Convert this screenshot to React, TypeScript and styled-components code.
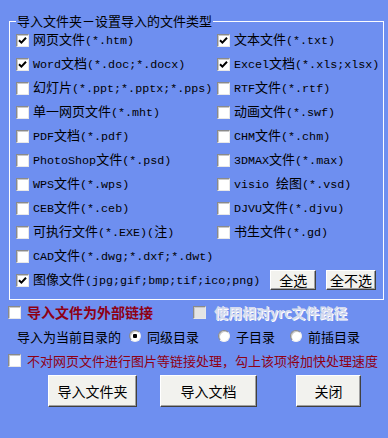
import styled, { createGlobalStyle } from 'styled-components';

type TItem = {
  label: string;
  checked?: boolean;
};

const leftItems: TItem[] = [
  { label: '网页文件(*.htm)', checked: true },
  { label: 'Word文档(*.doc;*.docx)', checked: true },
  { label: '幻灯片(*.ppt;*.pptx;*.pps)' },
  { label: '单一网页文件(*.mht)' },
  { label: 'PDF文档(*.pdf)' },
  { label: 'PhotoShop文件(*.psd)' },
  { label: 'WPS文件(*.wps)' },
  { label: 'CEB文件(*.ceb)' },
  { label: '可执行文件(*.EXE)(注)' },
  { label: 'CAD文件(*.dwg;*.dxf;*.dwt)' },
];

const rightItems: TItem[] = [
  { label: '文本文件(*.txt)', checked: true },
  { label: 'Excel文档(*.xls;xlsx)', checked: true },
  { label: 'RTF文件(*.rtf)' },
  { label: '动画文件(*.swf)' },
  { label: 'CHM文件(*.chm)' },
  { label: '3DMAX文件(*.max)' },
  { label: 'visio 绘图(*.vsd)' },
  { label: 'DJVU文件(*.djvu)' },
  { label: '书生文件(*.gd)' },
];

// ascii runs get the narrow mono face, like the half-width glyphs of the original
function LabelText({ text }: { text: string }) {
  const runs = text.match(/[\x20-\x7e]+|[^\x20-\x7e]+/g) || [];
  return (
    <>
      {runs.map((run, i) =>
        /^[\x20-\x7e]+$/.test(run) ? <Ascii key={i}>{run}</Ascii> : <span key={i}>{run}</span>
      )}
    </>
  );
}

function CheckBox({ checked, disabled }: { checked?: boolean; disabled?: boolean }) {
  return (
    <Box $disabled={disabled}>
      {checked && (
        <svg width='9' height='9' viewBox='0 0 9 9'>
          <path d='M1 4.2 L3.4 6.6 L8 1.8' fill='none' stroke='#000' strokeWidth='2' />
        </svg>
      )}
    </Box>
  );
}

function FileItem({ item }: { item: TItem }) {
  return (
    <Item>
      <CheckBox checked={item.checked} />
      <ItemText>
        <LabelText text={item.label} />
      </ItemText>
    </Item>
  );
}

export default function App() {
  return (
    <Frame>
      <GlobalStyle />
      <Group>
        <Legend>导入文件夹－设置导入的文件类型</Legend>
        <FileGrid>
          {leftItems.map((item, i) => (
            <GridPair key={item.label}>
              <FileItem item={item} />
              {rightItems[i] ? <FileItem item={rightItems[i]} /> : <span />}
            </GridPair>
          ))}
        </FileGrid>
        <LastRow>
          <FileItem item={{ label: '图像文件(jpg;gif;bmp;tif;ico;png)', checked: true }} />
          <SmallButton $width={47}>全选</SmallButton>
          <SmallButton $width={51}>全不选</SmallButton>
        </LastRow>
      </Group>

      <OptionRow>
        <OptionGroup $width={185}>
          <CheckBox />
          <StrongRed>导入文件为外部链接</StrongRed>
        </OptionGroup>
        <OptionGroup $gap={8}>
          <CheckBox disabled />
          <DisabledText>使用相对yrc文件路径</DisabledText>
        </OptionGroup>
      </OptionRow>

      <RadioRow>
        <RadioCaption>导入为当前目录的</RadioCaption>
        <RadioOption $width={89}>
          <Radio $checked />
          <span>同级目录</span>
        </RadioOption>
        <RadioOption $width={72}>
          <Radio />
          <span>子目录</span>
        </RadioOption>
        <RadioOption>
          <Radio />
          <span>前插目录</span>
        </RadioOption>
      </RadioRow>

      <OptionRow>
        <OptionGroup>
          <CheckBox />
          <RedText>不对网页文件进行图片等链接处理，勾上该项将加快处理速度</RedText>
        </OptionGroup>
      </OptionRow>

      <ActionBar>
        <ActionButton $width={89}>导入文件夹</ActionButton>
        <ActionButton $width={97} $offset={23}>
          导入文档
        </ActionButton>
        <ActionButton $width={65} $offset={39}>
          关闭
        </ActionButton>
      </ActionBar>
    </Frame>
  );
}

const GlobalStyle = createGlobalStyle`
  html, body {
    margin: 0;
    padding: 0;
    background: #6e8ff0;
  }
  body {
    font-family: "Noto Sans CJK SC", "Noto Sans", sans-serif;
    color: #000;
  }
`;

const Frame = styled.div`
  width: 388px;
  height: 438px;
  box-sizing: border-box;
  background: #6e8ff0;
  overflow: hidden;
`;

const Group = styled.fieldset`
  margin: 15px 0 0 9px;
  width: 375px;
  box-sizing: border-box;
  padding: 1px 7px 7px 6px;
  border: 1px solid #fbfcff;
  min-inline-size: 0;
`;

const Legend = styled.legend`
  padding: 0 1px;
  font-size: 13px;
  line-height: 12px;
  height: 12px;
`;

const FileGrid = styled.div`
  display: grid;
  grid-template-columns: 201px 1fr;
  grid-auto-rows: 24px;
`;

const GridPair = styled.div`
  display: contents;
`;

const Item = styled.label`
  display: flex;
  align-items: center;
  gap: 4px;
  white-space: nowrap;
  font-size: 13px;
  line-height: 24px;
`;

const ItemText = styled.span`
  display: inline-flex;
  align-items: baseline;
`;

const Ascii = styled.span`
  font-family: "Liberation Mono", "DejaVu Sans Mono", monospace;
  font-size: 11.7px;
  white-space: pre;
`;

const Box = styled.span<{ $disabled?: boolean }>`
  flex: none;
  width: 13px;
  height: 13px;
  box-sizing: border-box;
  display: inline-flex;
  align-items: center;
  justify-content: center;
  background: ${(p) => (p.$disabled ? '#e4e4e4' : '#fff')};
  border: 1px solid;
  border-color: #8a8a8a #e8e8e8 #e8e8e8 #8a8a8a;
  box-shadow: inset 1px 1px 0 #c8c8c8;
`;

const LastRow = styled.div`
  display: flex;
  align-items: center;
  height: 24px;
  gap: 10px;

  & > label {
    margin-right: auto;
  }
`;

const SmallButton = styled.button<{ $width: number }>`
  width: ${(p) => p.$width}px;
  height: 20px;
  padding: 0;
  font-family: "Noto Sans CJK SC", sans-serif;
  font-size: 14px;
  line-height: 18px;
  color: #000;
  background: #f2f2ee;
  border: 1px solid;
  border-color: #ffffff #404040 #404040 #ffffff;
  box-shadow: inset -1px -1px 0 #a0a0a0;
`;

const OptionRow = styled.div`
  display: flex;
  align-items: center;
  height: 24px;
  padding-left: 8px;
`;

const OptionGroup = styled.div<{ $width?: number; $gap?: number }>`
  display: flex;
  align-items: center;
  gap: ${(p) => p.$gap ?? 6}px;
  width: ${(p) => (p.$width ? `${p.$width}px` : 'auto')};
  white-space: nowrap;
`;

const StrongRed = styled.span`
  font-size: 14px;
  font-weight: bold;
  color: #8e0014;
`;

const RedText = styled.span`
  font-size: 13px;
  color: #8e0014;
`;

const DisabledText = styled.span`
  font-size: 14px;
  font-weight: bold;
  color: #d4daee;
  text-shadow: 1px 1px 0 #ffffff;
`;

const RadioRow = styled.div`
  display: flex;
  align-items: center;
  height: 24px;
  padding-left: 17px;
  font-size: 13px;
  white-space: nowrap;
`;

const RadioCaption = styled.span`
  width: 112px;
`;

const RadioOption = styled.label<{ $width?: number }>`
  display: flex;
  align-items: center;
  gap: 6px;
  width: ${(p) => (p.$width ? `${p.$width}px` : 'auto')};
`;

const Radio = styled.span<{ $checked?: boolean }>`
  flex: none;
  width: 12px;
  height: 12px;
  border-radius: 50%;
  box-sizing: border-box;
  background: ${(p) =>
    p.$checked ? 'radial-gradient(circle, #000 0 2px, #fff 2.5px)' : '#fff'};
  border: 1px solid;
  border-color: #8a8a8a #f0f0f0 #f0f0f0 #8a8a8a;
  box-shadow: inset 1px 1px 0 #c8c8c8;
`;

const ActionBar = styled.div`
  display: flex;
  margin-top: 3px;
  padding-left: 48px;
`;

const ActionButton = styled.button<{ $width: number; $offset?: number }>`
  width: ${(p) => p.$width}px;
  height: 32px;
  margin-left: ${(p) => p.$offset ?? 0}px;
  padding: 0;
  font-family: "Noto Sans CJK SC", sans-serif;
  font-size: 14px;
  color: #000;
  background: #f2f2ee;
  border: 1px solid;
  border-color: #ffffff #404040 #404040 #ffffff;
  box-shadow: inset -1px -1px 0 #a0a0a0;
`;
